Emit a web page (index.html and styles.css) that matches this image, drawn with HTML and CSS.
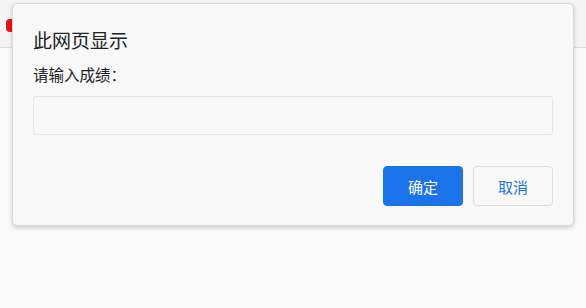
FILE: index.html
```html
<!DOCTYPE html>
<html lang="zh-CN">
<head>
<meta charset="utf-8">
<title>此网页显示</title>
<link rel="stylesheet" href="styles.css">
</head>
<body>
<div class="page">
  <div class="topbar"><span class="red-mark"></span></div>
</div>
<div class="dialog" role="dialog">
  <div class="title">此网页显示</div>
  <div class="message">请输入成绩：</div>
  <input class="field" type="text">
  <div class="actions">
    <button class="btn btn-primary">确定</button>
    <button class="btn btn-secondary">取消</button>
  </div>
</div>
</body>
</html>
```
FILE: styles.css
```css
html, body {
  margin: 0;
  padding: 0;
  width: 586px;
  height: 308px;
  overflow: hidden;
  background: #fafafa;
  font-family: "Noto Sans CJK SC", "Noto Sans", sans-serif;
}
.page {
  height: 308px;
}
.topbar {
  height: 48px;
  background: #f4f4f4;
  border-bottom: 1px solid #dedede;
  box-sizing: border-box;
  padding-top: 19px;
  padding-left: 6px;
}
.red-mark {
  display: block;
  width: 14px;
  height: 13px;
  border-radius: 4px;
  background: #ee1111;
}
.dialog {
  position: absolute;
  left: 12px;
  top: 3px;
  width: 562px;
  height: 223px;
  box-sizing: border-box;
  background: #f8f8f8;
  border: 1px solid #d9d9d9;
  border-radius: 5px;
  box-shadow: 0 2px 4px rgba(0,0,0,0.18);
  padding: 24px 20px 18px 20px;
  display: flex;
  flex-direction: column;
}
.title {
  font-size: 19px;
  line-height: 24px;
  color: #202124;
}
.message {
  margin-top: 12px;
  font-size: 15.5px;
  line-height: 20px;
  color: #202124;
}
.field {
  margin-top: 12px;
  height: 39px;
  box-sizing: border-box;
  border: 1px solid #e6e6e6;
  border-radius: 3px;
  background: #f8f8f8;
  outline: none;
  padding: 0 8px;
}
.actions {
  margin-top: 31px;
  display: flex;
  justify-content: flex-end;
  gap: 10px;
}
.btn {
  width: 80px;
  height: 40px;
  box-sizing: border-box;
  border-radius: 4px;
  font-family: "Noto Sans CJK SC", "Noto Sans", sans-serif;
  font-size: 15px;
  padding: 0;
}
.btn-primary {
  background: #1a73e8;
  border: 1px solid #1a73e8;
  color: #ffffff;
}
.btn-secondary {
  background: #f8f8f8;
  border: 1px solid #dadce0;
  color: #1a73e8;
}
```
